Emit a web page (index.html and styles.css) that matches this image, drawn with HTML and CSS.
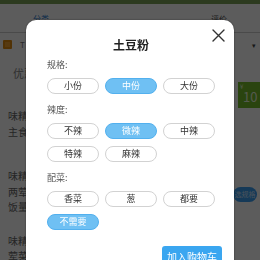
FILE: index.html
```html
<!DOCTYPE html>
<html lang="zh">
<head>
<meta charset="utf-8">
<link rel="stylesheet" href="styles.css">
</head>
<body>
<div class="page">
  <div class="status"></div>
  <div class="tabs">
    <span class="tab tab-active">分类</span>
    <span class="tab">评价</span>
  </div>
  <div class="notice">
    <span class="notice-icon"></span>
    <span class="notice-text">T 店铺公告</span>
    <span class="notice-arrow">▾</span>
  </div>
  <div class="main">
    <div class="list">
      <div class="cat">优惠</div>
      <div class="food food-1">
        <div class="line">味精面</div>
        <div class="line">主食类</div>
      </div>
      <div class="food food-2">
        <div class="line">味精面</div>
        <div class="line">两荤一素</div>
        <div class="line">饭量足</div>
      </div>
      <div class="food food-3">
        <div class="line">味精面</div>
        <div class="line">荤菜类</div>
      </div>
    </div>
    <div class="side">
      <div class="ticket"><span class="yen">¥</span>10</div>
      <div class="pill">选规格</div>
    </div>
  </div>
</div>

<div class="mask">
  <div class="modal">
    <div class="title">土豆粉</div>
    <svg class="close" width="13" height="13" viewBox="0 0 13 13">
      <path d="M1 1 L12 12 M12 1 L1 12" stroke="#333" stroke-width="1.4" fill="none" stroke-linecap="round"/>
    </svg>

    <div class="section">
      <div class="label">规格:</div>
      <div class="opts">
        <span class="opt">小份</span>
        <span class="opt opt-on">中份</span>
        <span class="opt">大份</span>
      </div>
    </div>

    <div class="section">
      <div class="label">辣度:</div>
      <div class="opts">
        <span class="opt">不辣</span>
        <span class="opt opt-on">微辣</span>
        <span class="opt">中辣</span>
        <span class="opt">特辣</span>
        <span class="opt">麻辣</span>
      </div>
    </div>

    <div class="section">
      <div class="label">配菜:</div>
      <div class="opts">
        <span class="opt">香菜</span>
        <span class="opt">葱</span>
        <span class="opt">都要</span>
        <span class="opt opt-on">不需要</span>
      </div>
    </div>

    <div class="footer">
      <span class="cart">加入购物车</span>
    </div>
  </div>
</div>
</body>
</html>
```
FILE: styles.css
```css
* { box-sizing: border-box; }

html, body {
  margin: 0;
  width: 260px;
  height: 260px;
  overflow: hidden;
}

body {
  font-family: "Noto Sans CJK SC", "Noto Sans", sans-serif;
  background: #fff;
  color: #555;
}

/* underlying page */
.page {
  width: 260px;
  height: 260px;
  background: #fff;
}

.status {
  height: 4px;
  background: #7aa156;
}

.tabs {
  height: 29px;
  display: flex;
  justify-content: space-between;
  align-items: center;
  padding: 0 33px 0 33px;
  border-bottom: 1px solid #ccc;
  font-size: 8px;
}

.tab-active { color: #2a7ad0; }

.notice {
  height: 17px;
  margin-top: 3px;
  display: flex;
  align-items: center;
  padding: 0 4px 0 3px;
  font-size: 8px;
}

.notice-icon {
  width: 9px;
  height: 9px;
  background: #f0a030;
  border: 2px solid #e08a10;
  border-radius: 1px;
}

.notice-text {
  margin-left: 8px;
  flex: 1;
  color: #777;
}

.notice-arrow {
  font-size: 7px;
  color: #444;
}

.main {
  display: flex;
}

.list {
  flex: 1;
  padding-left: 8px;
  font-size: 10px;
  color: #666;
}

.cat {
  margin-top: 12px;
  padding-left: 5px;
  font-size: 11px;
  line-height: 16px;
  color: #888;
}

.line { line-height: 15.5px; }

.food-1 { margin-top: 27px; }
.food-2 { margin-top: 29px; }
.food-3 { margin-top: 18px; }

.side {
  width: 27px;
  display: flex;
  flex-direction: column;
  align-items: flex-end;
}

.ticket {
  margin-top: 29px;
  width: 22px;
  height: 26px;
  background: #74bd2c;
  color: #e8f5d8;
  font-size: 13px;
  line-height: 30px;
  padding-left: 5px;
  white-space: nowrap;
  overflow: hidden;
  position: relative;
}

.yen {
  position: absolute;
  left: 2px;
  top: -10px;
  font-size: 6px;
}

.pill {
  margin-top: 79px;
  margin-right: 3px;
  width: 24px;
  height: 15px;
  border-radius: 8px;
  background: #3a9ff2;
  color: #c8e2fb;
  font-size: 7px;
  line-height: 15px;
  text-align: center;
  white-space: nowrap;
  overflow: hidden;
}

/* overlay + modal */
.mask {
  position: fixed;
  inset: 0;
  background: rgba(0, 0, 0, 0.64);
  padding: 20px 26px 0 26px;
  overflow: hidden;
}

.modal {
  position: relative;
  background: #fff;
  border-radius: 10px 10px 0 0;
  height: 260px;
  padding: 17px 19px 0 21px;
  box-shadow: 0 0 2px rgba(0, 0, 0, 0.5);
}

.title {
  font-size: 12px;
  font-weight: bold;
  line-height: 16px;
  text-align: center;
  color: #222;
  margin-bottom: 6px;
}

.close {
  position: absolute;
  top: 9px;
  right: 9px;
  display: block;
}

.section + .section { margin-top: 10px; }

.label {
  font-size: 9px;
  line-height: 12px;
  color: #555;
  margin-bottom: 7px;
}

.opts {
  display: grid;
  grid-template-columns: repeat(3, 52px);
  column-gap: 6px;
  row-gap: 7px;
}

.opt {
  height: 16px;
  border: 1px solid #d2d2d2;
  border-radius: 8px;
  background: #fff;
  color: #333;
  font-size: 9px;
  line-height: 14px;
  text-align: center;
}

.opt-on {
  background: #6fc0f3;
  border-color: #52b0ee;
  color: #fff;
}

.footer {
  display: flex;
  justify-content: flex-end;
  margin-top: 16px;
  margin-right: -7px;
}

.cart {
  width: 60px;
  height: 20px;
  background: #3aa6f0;
  color: #fff;
  font-size: 10px;
  line-height: 22px;
  text-align: center;
  border-radius: 3px;
}
```
